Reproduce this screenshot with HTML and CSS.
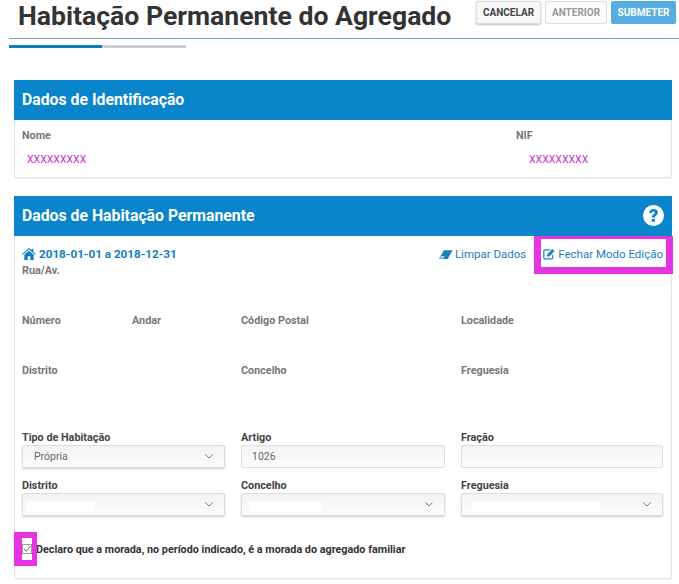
FILE: index.html
```html
<!DOCTYPE html>
<html lang="pt">
<head>
<meta charset="utf-8">
<title>Habitação Permanente do Agregado</title>
<link rel="stylesheet" href="styles.css">
</head>
<body>
<header class="top">
  <h1>Habitação Permanente do Agregado</h1>
  <div class="actions">
    <button class="btn">CANCELAR</button>
    <button class="btn muted">ANTERIOR</button>
    <button class="btn primary">SUBMETER</button>
  </div>
</header>
<div class="progress"><div class="progress-done"></div></div>

<section class="card card-id">
  <h2 class="card-head">Dados de Identificação</h2>
  <div class="id-body">
    <div class="id-col">
      <div class="lbl">Nome</div>
      <div class="xval">XXXXXXXXX</div>
    </div>
    <div class="id-col nif">
      <div class="lbl">NIF</div>
      <div class="xval">XXXXXXXXX</div>
    </div>
  </div>
</section>

<section class="card card-hab">
  <h2 class="card-head head-help">Dados de Habitação Permanente
    <svg class="help" viewBox="0 0 20 20" width="21" height="21"><circle cx="10" cy="10" r="10" fill="#fff"/><path d="M5.800 7.500c.2-2.300 1.900-3.600 4.300-3.600 2.400 0 4.100 1.300 4.100 3.300 0 1.600-.9 2.300-1.900 3-.8.500-1 .9-1 1.600H8.500c0-1.600.4-2.400 1.500-3.100.8-.5 1.200-.9 1.200-1.400 0-.7-.5-1.100-1.200-1.100-.8 0-1.300.5-1.400 1.300z" fill="#0a84cb"/><rect x="8.500" y="13.200" width="2.800" height="2.800" fill="#0a84cb"/></svg>
  </h2>
  <div class="hab-body">
    <div class="period-row">
      <div class="period">
        <svg viewBox="0 0 16 14" width="14" height="12"><path d="M8 0l3 2.600V1h2v3.300L16 7l-.8.900L8 1.800.8 7.900 0 7z" fill="#0d7fbe"/><path d="M8 3.200l5.500 4.600V14H9.500V9.500h-3V14h-4V7.800z" fill="#0d7fbe"/></svg>
        2018-01-01 a 2018-12-31
      </div>
      <div class="links">
        <a class="link">
          <svg viewBox="0 0 16 12" width="14" height="11"><path d="M5.500 1H15.500L10 11H0z" fill="#1b82b8"/><path d="M1.800 7.700h5l-1.800 3H.4z" fill="#a6d2e6"/></svg>
          Limpar Dados</a>
        <a class="link">
          <svg viewBox="0 0 16 14" width="13" height="12"><path d="M12 8v3.500c0 .8-.6 1.500-1.500 1.500h-8C1.700 13 1 12.300 1 11.500v-8C1 2.700 1.700 2 2.500 2H9" fill="none" stroke="#1b82b8" stroke-width="1.500"/><path d="M5 7.500L11.500.8l2.700 2.700L7.700 10H5z" fill="#1b82b8"/></svg>
          Fechar Modo Edição</a>
      </div>
    </div>
    <div class="lbl rua">Rua/Av.</div>
    <div class="grid3 addr1">
      <div class="split"><div class="lbl">Número</div><div class="lbl">Andar</div></div>
      <div class="lbl">Código Postal</div>
      <div class="lbl">Localidade</div>
    </div>
    <div class="grid3 addr2">
      <div class="lbl">Distrito</div>
      <div class="lbl">Concelho</div>
      <div class="lbl">Freguesia</div>
    </div>
    <div class="grid3 form1">
      <div class="field"><div class="lbl dark">Tipo de Habitação</div>
        <div class="ctl sel"><span class="sel-text">Própria</span><svg class="chev" viewBox="0 0 8 5" width="8" height="5"><path d="M.5.5L4 4 7.500.5" fill="none" stroke="#777" stroke-width="1"/></svg></div></div>
      <div class="field"><div class="lbl dark">Artigo</div>
        <div class="ctl input"><span class="in-text">1026</span></div></div>
      <div class="field"><div class="lbl dark">Fração</div>
        <div class="ctl input"></div></div>
    </div>
    <div class="grid3 form2">
      <div class="field"><div class="lbl dark">Distrito</div>
        <div class="ctl sel"><span class="mask m1"></span><svg class="chev" viewBox="0 0 8 5" width="8" height="5"><path d="M.5.5L4 4 7.500.5" fill="none" stroke="#777" stroke-width="1"/></svg></div></div>
      <div class="field"><div class="lbl dark">Concelho</div>
        <div class="ctl sel"><span class="mask m2"></span><svg class="chev" viewBox="0 0 8 5" width="8" height="5"><path d="M.5.5L4 4 7.500.5" fill="none" stroke="#777" stroke-width="1"/></svg></div></div>
      <div class="field"><div class="lbl dark">Freguesia</div>
        <div class="ctl sel"><span class="mask m3"></span><svg class="chev" viewBox="0 0 8 5" width="8" height="5"><path d="M.5.5L4 4 7.500.5" fill="none" stroke="#777" stroke-width="1"/></svg></div></div>
    </div>
    <div class="declare">Declaro que a morada, no período indicado, é a morada do agregado familiar</div>
  </div>
  <div class="mark-edit"></div>
  <div class="mark-check">
    <div class="check-white">
      <svg viewBox="0 0 10 10" width="10" height="10"><rect x=".5" y=".5" width="9" height="9" fill="#fff" stroke="#999"/><path d="M2 5l2.200 2.400L8.500 2" fill="none" stroke="#666" stroke-width="1"/></svg>
    </div>
  </div>
</section>
</body>
</html>
```
FILE: styles.css
```css
* { box-sizing: border-box; }
html, body { margin: 0; padding: 0; }
body {
  width: 679px;
  height: 584px;
  overflow: hidden;
  background: #fff;
  font-family: Roboto, "Liberation Sans", sans-serif;
  color: #333;
}
.top {
  display: flex;
  justify-content: space-between;
  margin-left: 9px;
  height: 39px;
  border-bottom: 1px solid #6fa6bd;
  padding: 0 3px 0 9px;
}
h1 {
  margin: 0;
  font-size: 26.600px;
  line-height: 32px;
  font-weight: 700;
  color: #333;
  white-space: nowrap;
}
.actions { display: flex; gap: 4px; padding-top: 1px; }
.btn {
  height: 23px;
  padding: 0;
  width: 65px;
  border: 1px solid #ddd;
  border-radius: 2px;
  background: #f8f8f8;
  font: 700 10px Roboto, sans-serif;
  color: #444;
  box-shadow: 0 1px 2px rgba(0,0,0,.25);
}
.btn.muted { color: #999; box-shadow: none; background: #fcfcfc; width: 62px; }
.btn.primary { background: #56ade0; border-color: #56ade0; color: #fff; width: 65px; box-shadow: none; }
.progress {
  margin: 6px 0 0 9px;
  width: 177px;
  height: 3px;
  background: #ccc;
}
.progress-done { width: 93px; height: 3px; background: #0f7db9; }
.card {
  margin: 0 7px 0 14px;
  border: 1px solid #e4e4e4;
  border-top: 0;
  border-radius: 2px;
  box-shadow: 0 1px 1px rgba(0,0,0,.05);
}
.card-id { margin-top: 32px; height: 98px; }
.card-hab { margin-top: 18px; height: 383px; position: relative; }
.card-head {
  margin: 0 -1px;
  height: 40px;
  background: #0a84cb;
  color: #fff;
  font-size: 15.800px;
  font-weight: 700;
  line-height: 39px;
  padding-left: 8px;
}
.head-help { display: flex; justify-content: space-between; align-items: center; padding-right: 8px; padding-bottom: 2px; }
.id-body { display: flex; padding: 9px 8px 0 7px; }
.id-col { width: 494px; }
.nif { width: auto; }
.lbl { font-size: 10.800px; font-weight: 700; color: #777; line-height: 13px; }
.lbl.dark { color: #444; }
.xval { font-size: 10.500px; color: #c92fc9; line-height: 13px; margin: 11px 0 0 5px; }
.nif .xval { margin-left: 13px; }
.hab-body { padding: 11px 8px 0 7px; }
.period-row { display: flex; justify-content: space-between; height: 14px; }
.period { display: flex; align-items: center; gap: 3px; font-size: 11.700px; font-weight: 700; color: #0d7fbe; line-height: 14px; }
.links { display: flex; gap: 17px; }
.link { display: flex; align-items: center; gap: 2px; font-size: 11.500px; color: #1b82b8; line-height: 14px; }
.rua { margin-top: 3px; }
.grid3 { display: grid; grid-template-columns: 203px 204px 202px; column-gap: 16px; }
.addr1 { margin-top: 37px; }
.addr2 { margin-top: 37px; }
.split { display: grid; grid-template-columns: 110px 1fr; }
.form1 { margin-top: 54px; }
.form2 { margin-top: 11px; }
.field .lbl { margin-bottom: 1px; }
.ctl {
  position: relative;
  height: 23px;
  border: 1px solid #ddd;
  border-radius: 2px;
  background: linear-gradient(#f3f3f5, #fcfcfc);
  font-size: 10.500px;
  color: #666;
  line-height: 21px;
}
.sel { box-shadow: 0 1px 2px rgba(0,0,0,.2); }
.sel-text { padding-left: 11px; }
.in-text { padding-left: 10px; }
.chev { position: absolute; right: 11px; top: 8px; }
.mask { position: absolute; top: 7px; height: 10px; background: #fff; }
.m1 { left: 4px; width: 68px; }
.m2 { left: 7px; width: 72px; }
.m3 { left: 10px; width: 128px; }
.declare { margin: 27px 0 0 14px; font-size: 10.800px; font-weight: 700; color: #333; line-height: 13px; }
.mark-edit {
  position: absolute;
  left: 519px;
  top: 40px;
  width: 139px;
  height: 38px;
  border-style: solid;
  border-color: #e535e0;
  border-width: 3px 7px 7px;
}
.mark-check {
  position: absolute;
  left: -1px;
  top: 336px;
  width: 23px;
  height: 34px;
  background: #e535e0;
  padding: 6px 5px 6px 8px;
}
.check-white {
  height: 22px;
  background: #fff;
  display: flex;
  align-items: center;
}
```
